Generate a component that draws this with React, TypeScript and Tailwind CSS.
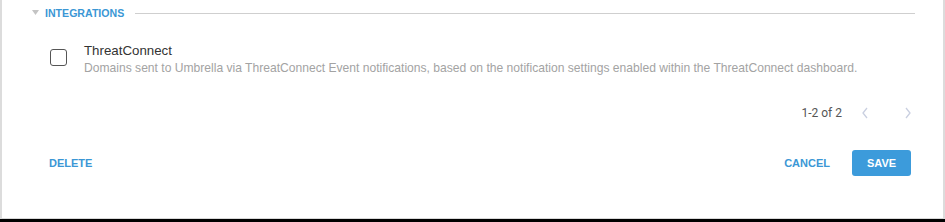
import React from "react";

export default function App() {
  return (
    <div className="w-[945px] h-[222px] bg-white flex flex-col" style={{ fontFamily: '"Liberation Sans", Arial, sans-serif' }}>
      <div className="flex-1 flex flex-col border-l-2 border-r-2 border-[#dcdcdc] border-b border-b-[#d8d8d8]">
        {/* header */}
        <div className="flex items-center h-[26px] pl-[30px] pr-[28px]">
          <svg width="7" height="5" viewBox="0 0 7 5" className="mr-[6px] -mt-[2px]">
            <path d="M0 0 L7 0 L3.5 5 Z" fill="#c4c4c4" />
          </svg>
          <span className="text-[10.6px] font-bold text-[#3b97d5] leading-none">INTEGRATIONS</span>
          <div className="flex-1 h-px bg-[#cfcfcf] ml-[11px]" />
        </div>
        {/* row */}
        <div className="flex items-start pl-[48px] mt-[17px]">
          <div className="w-[17px] h-[17px] border border-[#555] rounded-[3px] mt-[6px] bg-white" />
          <div className="ml-[17px] flex flex-col">
            <span className="text-[13.3px] text-[#333] leading-[16px]">ThreatConnect</span>
            <span className="text-[12.1px] text-[#a3a3a3] leading-[14px] mt-[2px]">
              Domains sent to Umbrella via ThreatConnect Event notifications, based on the notification settings enabled within the ThreatConnect dashboard.
            </span>
          </div>
        </div>
        {/* pagination */}
        <div className="flex items-center justify-end h-[14px] mt-[31px] pr-[31px]" style={{ fontFamily: 'Roboto, sans-serif' }}>
          <span className="text-[12px] text-[#555] leading-[14px]">1-2 of 2</span>
          <svg width="8" height="12" viewBox="0 0 8 12" className="ml-[19px]">
            <path d="M6 1 L2 6 L6 11" stroke="#c9cfe0" strokeWidth="1.3" fill="none" />
          </svg>
          <svg width="8" height="12" viewBox="0 0 8 12" className="ml-[35px]">
            <path d="M2 1 L6 6 L2 11" stroke="#c9cfe0" strokeWidth="1.3" fill="none" />
          </svg>
        </div>
        {/* footer */}
        <div className="flex items-center mt-[30px] pl-[47px] pr-[32px]">
          <span className="text-[11px] font-bold text-[#3b97d5]">DELETE</span>
          <div className="flex-1" />
          <span className="text-[11px] font-bold text-[#3b97d5]">CANCEL</span>
          <div className="ml-[22px] w-[59px] h-[26px] rounded-[3px] bg-[#3c9bdb] flex items-center justify-center">
            <span className="text-[11px] font-bold text-white">SAVE</span>
          </div>
        </div>
        <div className="flex-1" />
      </div>
      <div className="h-[3px] bg-black" />
    </div>
  );
}
